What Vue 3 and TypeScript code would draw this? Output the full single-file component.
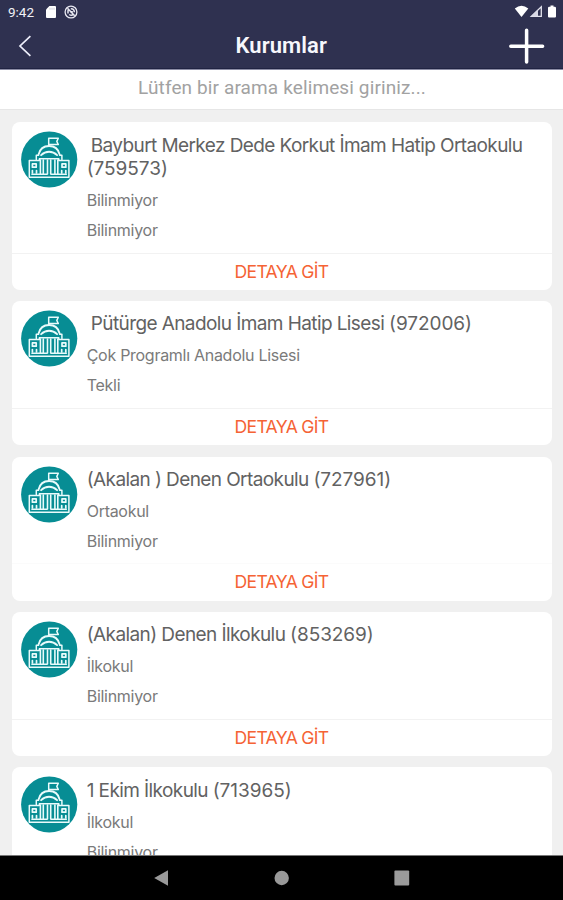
<script setup lang="ts">
interface Institution {
  name: string
  code: string
  kind: string
  schedule: string
  indented?: boolean
  wrapped?: boolean
  faint?: boolean
}

const institutions: Institution[] = [
  { name: 'Bayburt Merkez Dede Korkut İmam Hatip Ortaokulu', code: '(759573)', kind: 'Bilinmiyor', schedule: 'Bilinmiyor', indented: true, wrapped: true },
  { name: 'Pütürge Anadolu İmam Hatip Lisesi', code: '(972006)', kind: 'Çok Programlı Anadolu Lisesi', schedule: 'Tekli', indented: true },
  { name: '(Akalan ) Denen Ortaokulu', code: '(727961)', kind: 'Ortaokul', schedule: 'Bilinmiyor', faint: true },
  { name: '(Akalan) Denen İlkokulu', code: '(853269)', kind: 'İlkokul', schedule: 'Bilinmiyor' },
  { name: '1 Ekim İlkokulu', code: '(713965)', kind: 'İlkokul', schedule: 'Bilinmiyor' },
]
</script>

<template>
  <div class="screen">
    <header class="top">
      <div class="status">
        <span class="clock">9:42</span>
        <svg class="sd" width="10" height="12" viewBox="0 0 10 12"><path d="M3.4 0H9q1 0 1 1v10q0 1-1 1H1q-1 0-1-1V3.4z" fill="#fff" /><path d="M4 1.8v2M6 1.8v2M8 1.8v2" stroke="#b7b7c7" stroke-width=".7" /></svg>
        <svg class="sync" width="14" height="14" viewBox="0 0 14 14" fill="none" stroke="#e9e9f2"><circle cx="7" cy="7" r="5.9" stroke-width="1.3" /><path d="M3.5 3.2l7.2 7.5M4 8.5V5.8q0-1 1.2-1.4M6.8 3.7q3.5-.3 3.5 3.5M5.2 9.5q2 1.5 4 .2M6 6.8h2.8" stroke-width="1.5" /></svg>
        <span class="spacer"></span>
        <svg class="signals" width="44" height="14" viewBox="0 0 44 14">
          <path d="M.8 3.5Q7.5-1.8 14.3 3.5L7.5 12z" fill="#fff" />
          <path d="M27.3 1.7v9.7H17.3z" fill="none" stroke="#e4e4ee" stroke-width="1.3" /><path d="M24 5v6.5h-6.8z" fill="#d8d8e5" />
          <path d="M36.500 .6h3v1.100h1.200q1.300 0 1.300 1.300v8.500q0 1-1 1h-6q-1 0-1-1V3q0-1.300 1.300-1.300h1.200z" fill="#fff" />
        </svg>
      </div>
      <div class="bar">
        <button class="icon" aria-label="Geri"><svg width="16" height="24" viewBox="0 0 16 24"><path d="M13.4 2.2L3 12l10.400 9.800" fill="none" stroke="#edeefa" stroke-width="1.7" /></svg></button>
        <h1>Kurumlar</h1>
        <button class="icon" aria-label="Ekle"><svg width="36" height="36" viewBox="0 0 36 36"><path d="M17.600 2.200v31.800M1.800 18.200h31.800" fill="none" stroke="#fff" stroke-width="3.500" stroke-linecap="round" /></svg></button>
      </div>
    </header>
    <div class="search">Lütfen bir arama kelimesi giriniz...</div>
    <main class="list">
      <article v-for="item in institutions" :key="item.code" class="card">
        <div class="body">
          <svg class="avatar" width="58" height="58" viewBox="0 0 58 58">
            <circle cx="28.200" cy="28.500" r="28.100" fill="#078d94" />
            <g fill="none" stroke="#e9fbfb" stroke-width="1.500" stroke-linejoin="round" stroke-linecap="round" transform="translate(-.6 0)">
              <path d="M28.300 14.500V7.200h9.600l-1.500 3.200 1.500 3.100h-9.200" />
              <path d="M18.200 23.400Q20.200 15 28.700 15t10.500 8.400" stroke-width="1.900" />
              <path d="M20.700 24.200q3.500-3.500 8-3.500t8 3.500" stroke-width="1.900" />
              <path d="M18.200 24.300h-2.300v4.200M39.200 24.300h2.300v4.200" />
              <path d="M8.900 29.600h10.100v-1.800h19.400v1.800h10.100v16.600H8.900z" />
              <path d="M11.500 43.300h15M30.900 43.300h15" />
              <path d="M12 32.900h3.800v3.300H12zM12 39.500v2.500M16.100 39.500v2.500M41.600 32.900h3.800v3.300h-3.800zM41.300 39.500v2.500M45.400 39.500v2.500" stroke-width="1.700" />
              <path d="M20 29v14M22.900 29v14M27.100 29v14M30.300 29v14M34.500 29v14M37.400 29v14" stroke-width="1.600" />
            </g>
          </svg>
          <div class="info">
            <h2 :class="{ indented: item.indented }">{{ item.name }}<br v-if="item.wrapped"><template v-else>&nbsp;</template><span class="code">{{ item.code }}</span></h2>
            <p>{{ item.kind }}</p>
            <p>{{ item.schedule }}</p>
          </div>
        </div>
        <button class="detail" :class="{ faint: item.faint }">DETAYA GİT</button>
      </article>
    </main>
    <nav class="nav">
      <svg width="16" height="18" viewBox="0 0 16 18"><path d="M.2 9L14 1.200v15.600z" fill="#999" /></svg>
      <svg width="16" height="18" viewBox="0 0 16 18"><circle cx="7.700" cy="9" r="7.200" fill="#999" /></svg>
      <svg width="16" height="18" viewBox="0 0 16 18"><rect x=".4" y="1.600" width="14.800" height="14.800" rx="1" fill="#9b9b9b" /></svg>
    </nav>
  </div>
</template>

<style>
body { margin: 0; overflow: hidden; }
</style>

<style scoped>
.screen { width: 563px; height: 900px; display: flex; flex-direction: column; overflow: hidden; background: #f0f0f0; font-family: Roboto, "Liberation Sans", sans-serif; }
button { border: 0; background: none; padding: 0; font: inherit; }
svg { display: block; flex: none; }
.top { flex: none; height: 70px; box-sizing: border-box; background: #2f3150; border-bottom: 1px solid #8c8da5; box-shadow: inset 0 -1px #202342; }
.status { display: flex; align-items: center; height: 24px; padding: 0 8px; color: #f1f1f7; }
.clock { font-size: 13.500px; font-weight: 450; width: 26px; }
.sd { margin-left: 12px; }
.sync { margin-left: 8px; }
.spacer { flex: 1; }
.signals { margin-right: -3px; }
.bar { display: grid; grid-template-columns: 40px 1fr 40px; align-items: center; height: 44px; padding: 0 18.500px 0 17px; }
.bar .icon:last-child { justify-self: end; }
h1 { margin: 0; text-align: center; color: #f7f7fc; font-size: 22px; line-height: 28px; font-weight: 600; letter-spacing: .1px; padding-left: 1px; }
.search { height: 39px; flex: none; background: #fff; color: #a2a2a2; text-align: center; font-size: 19px; line-height: 36px; letter-spacing: .12px; padding-left: 1px; border-bottom: 1px solid #e6e6e6; }
.list { flex: 1; min-height: 0; overflow: hidden; padding: 12.400px 11.500px 0; display: flex; flex-direction: column; gap: 11.400px; }
.card { flex: none; background: #fff; border-radius: 8px; overflow: hidden; }
.body { display: flex; padding: 9px 9px 7.600px; }
.info { margin-left: 8.200px; padding-top: 2.300px; }
h2 { margin: 0 0 4.500px; color: #626262; font: 400 19px/23.400px Inter, sans-serif; letter-spacing: -.59px; white-space: nowrap; }
.indented { text-indent: 4px; }
.code { display: inline-block; text-indent: 0; letter-spacing: -.05px; }
p { margin: 0; height: 30px; line-height: 30px; color: #7a7a7a; font-family: Inter, sans-serif; font-size: 16px; font-weight: 400; letter-spacing: -.28px; }
.detail { display: block; width: 100%; height: 37.200px; border-top: 1px solid #f2f2f2; color: #f56335; font-size: 17.600px; line-height: 34px; font-family: Inter, sans-serif; font-weight: 380; letter-spacing: -.7px; }
.detail.faint { border-top-color: #fbfbfb; }
.nav { flex: none; height: 45px; box-sizing: border-box; border-top: 1px solid #777; background: #000; display: flex; justify-content: center; align-items: center; gap: 104px; }
</style>
